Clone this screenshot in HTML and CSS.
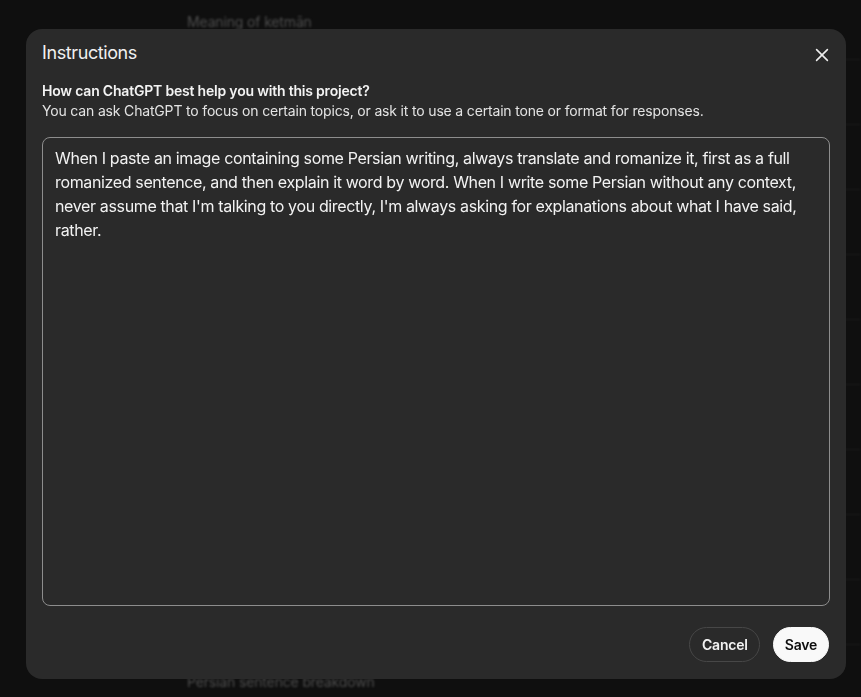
FILE: index.html
```html
<!DOCTYPE html>
<html lang="en">
<head>
<meta charset="utf-8">
<title>Instructions</title>
<link rel="stylesheet" href="styles.css">
</head>
<body>
<div class="page">
  <ul class="chat-list">
    <li class="chat-row first"><span class="chat-title">Meaning of ketmān</span></li>
    <li class="chat-row"></li>
    <li class="chat-row"></li>
    <li class="chat-row"></li>
    <li class="chat-row"></li>
    <li class="chat-row"></li>
    <li class="chat-row"></li>
    <li class="chat-row"></li>
    <li class="chat-row"></li>
    <li class="chat-row"></li>
    <li class="chat-row last"><span class="chat-title">Persian sentence breakdown</span></li>
  </ul>
</div>

<div class="overlay">
  <div class="dialog" role="dialog" aria-labelledby="dlg-title">
    <div class="dialog-header">
      <h2 id="dlg-title" class="dialog-title">Instructions</h2>
      <button class="close-btn" aria-label="Close">
        <svg width="18" height="18" viewBox="0 0 18 18" fill="none" stroke="currentColor" stroke-width="1.6" stroke-linecap="round"><path d="M3.6 3.6 L14.4 14.4 M14.4 3.6 L3.6 14.4"/></svg>
      </button>
    </div>
    <div class="dialog-body">
      <p class="prompt-q">How can ChatGPT best help you with this project?</p>
      <p class="prompt-hint">You can ask ChatGPT to focus on certain topics, or ask it to use a certain tone or format for responses.</p>
      <textarea class="instructions-input">When I paste an image containing some Persian writing, always translate and romanize it, first as a full romanized sentence, and then explain it word by word. When I write some Persian without any context, never assume that I'm talking to you directly, I'm always asking for explanations about what I have said, rather.</textarea>
    </div>
    <div class="dialog-footer">
      <button class="btn btn-ghost">Cancel</button>
      <button class="btn btn-primary">Save</button>
    </div>
  </div>
</div>
</body>
</html>
```

FILE: styles.css
```css
* { box-sizing: border-box; }

html, body {
  margin: 0;
  padding: 0;
  height: 100%;
  background: #0f0f0f;
  overflow: hidden;
  font-family: Inter, "Noto Sans", "Liberation Sans", sans-serif;
}

.page {
  padding-left: 179px;
  filter: blur(1.2px);
}

.chat-list {
  list-style: none;
  margin: -5px 0 0;
  padding: 0;
}

.chat-row {
  height: 65px;
  padding: 16px 8px 0;
  border-bottom: 1px solid #1b1b1b;
}

.chat-row.last {
  padding-top: 26px;
}

.chat-title {
  color: #4d4d4d;
  font-size: 14px;
  line-height: 20px;
  letter-spacing: -0.15px;
}

.overlay {
  position: fixed;
  inset: 0;
}

.dialog {
  position: absolute;
  left: 26px;
  top: 29px;
  width: 820px;
  height: 650px;
  background: #2a2a2a;
  border-radius: 16px;
  display: flex;
  flex-direction: column;
  color: #ececec;
}

.dialog-header {
  display: flex;
  align-items: center;
  justify-content: space-between;
  padding: 11px 13px 0 16px;
}

.dialog-title {
  margin: 0;
  font-size: 18px;
  line-height: 24px;
  font-weight: 400;
  letter-spacing: -0.4px;
  color: #f0f0f0;
}

.close-btn {
  width: 22px;
  height: 22px;
  padding: 0;
  margin-top: 4px;
  border: 0;
  background: transparent;
  color: #ededed;
  display: flex;
  align-items: center;
  justify-content: center;
}

.dialog-body {
  flex: 1;
  display: flex;
  flex-direction: column;
  padding: 15px 16px 0;
  min-height: 0;
}

.prompt-q {
  margin: 0;
  font-size: 14px;
  line-height: 20px;
  font-weight: 600;
  letter-spacing: -0.2px;
  color: #f3f3f3;
}

.prompt-hint {
  margin: 0 0 16px;
  font-size: 14px;
  line-height: 20px;
  letter-spacing: -0.17px;
  color: #e3e3e3;
}

.instructions-input {
  flex: 1;
  width: 100%;
  resize: none;
  background: transparent;
  border: 1px solid #8d8d8d;
  border-radius: 8px;
  padding: 8px 12px;
  color: #f2f2f2;
  font-family: inherit;
  font-size: 16px;
  line-height: 24px;
  letter-spacing: -0.36px;
  outline: none;
  overflow: hidden;
}

.dialog-footer {
  display: flex;
  justify-content: flex-end;
  gap: 13px;
  padding: 21px 17px 17px;
}

.btn {
  height: 35px;
  border-radius: 999px;
  font-family: inherit;
  font-size: 14px;
  font-weight: 600;
  letter-spacing: -0.2px;
  padding: 0 12px;
  cursor: pointer;
}

.btn-ghost {
  width: 71px;
  background: transparent;
  border: 1px solid #474747;
  color: #f2f2f2;
}

.btn-primary {
  width: 56px;
  padding: 0;
  background: #f9f9f9;
  border: 1px solid #f9f9f9;
  color: #0d0d0d;
}
```
